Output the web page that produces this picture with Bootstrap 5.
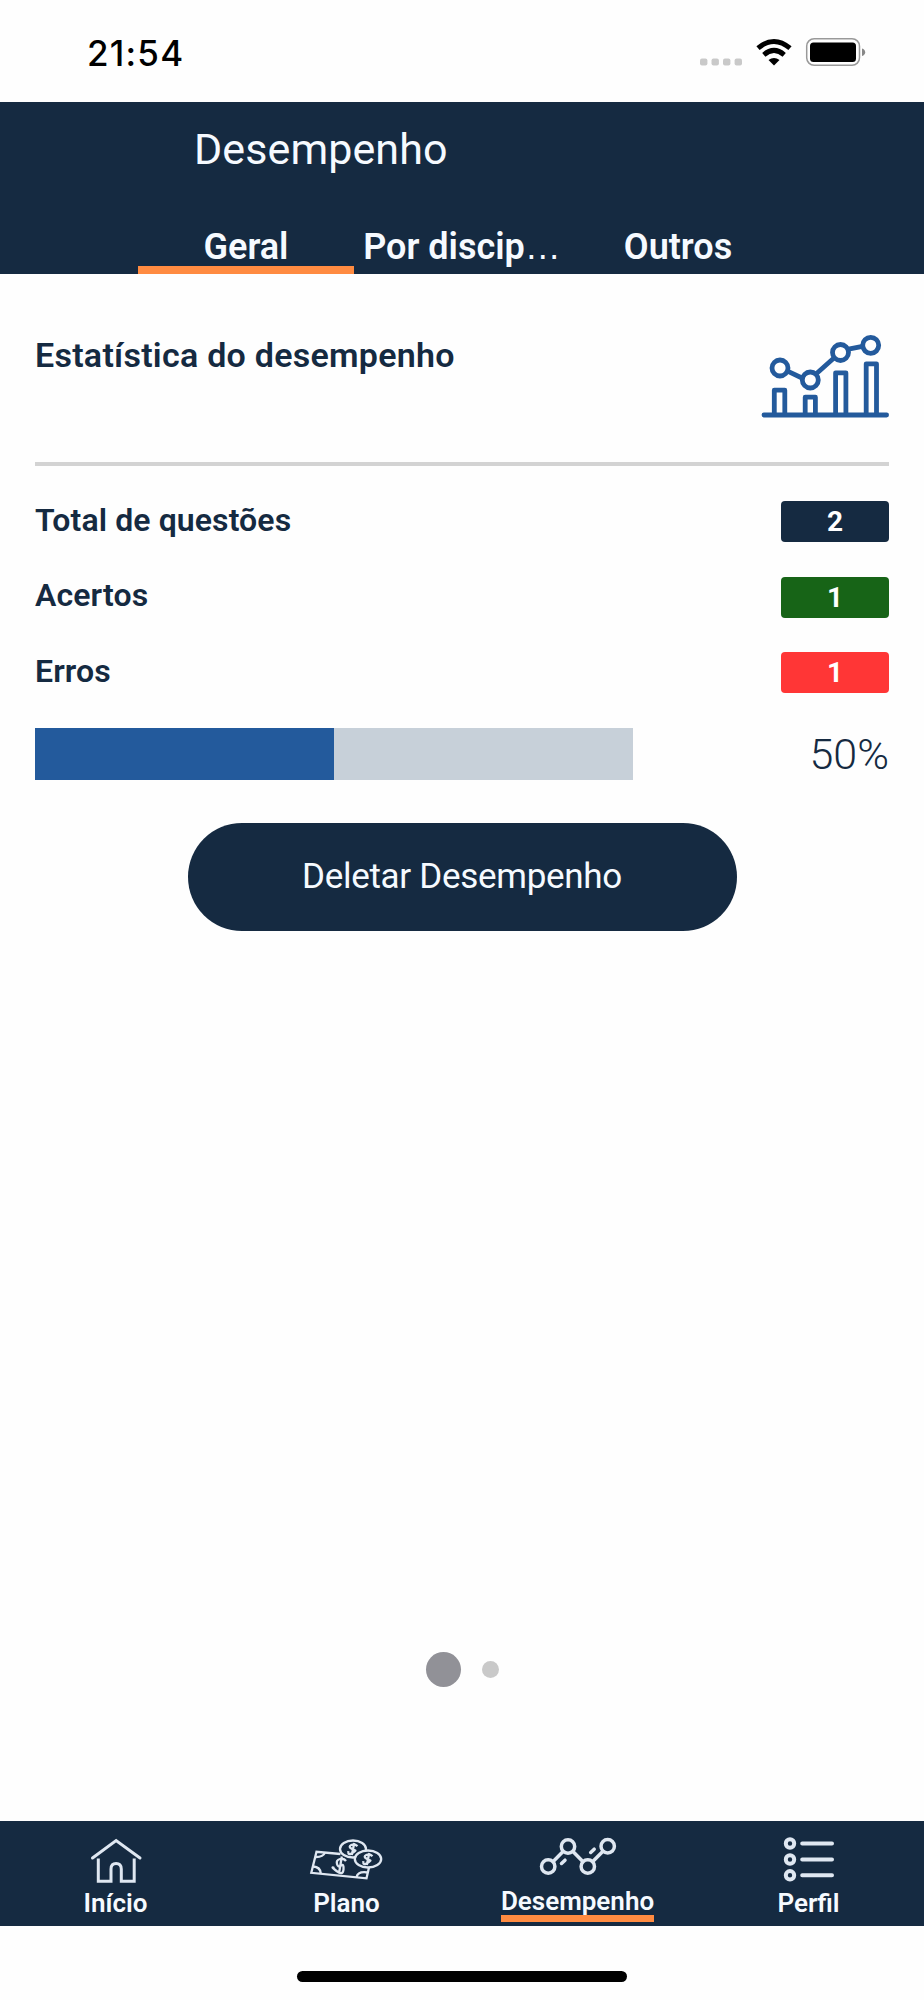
<!DOCTYPE html>
<html lang="pt-BR">
<head>
<meta charset="utf-8">
<meta name="viewport" content="width=device-width, initial-scale=1">
<title>Desempenho</title>
<link href="https://cdn.jsdelivr.net/npm/bootstrap@5.3.0/dist/css/bootstrap.min.css" rel="stylesheet">
<style>
:root{--navy:#152a41;--blue:#235a9c;--orange:#ff8b41}
body{font-family:Roboto,"Liberation Sans",sans-serif;color:var(--navy);background:#fefefe}
.screen{height:2000px;overflow:hidden}
.statusbar{height:102px;padding:0 58px 0 87px}
.clock{font:500 35px/40px Inter,Roboto,sans-serif;letter-spacing:1.2px;color:#000;padding-top:33px}
.status-icons{width:170px;height:40px;margin-top:32px}
.app-header{background:var(--navy);color:#f6faff;height:172px}
.app-title{font-size:43px;font-weight:400;line-height:94px;letter-spacing:.1px;padding-left:194px;margin:0}
.tabs-row{width:648px}
.tab-link{flex:1 1 0;min-width:0;padding:32px 0 0;height:78px;font-size:36px;line-height:38px;font-weight:600;text-align:center;white-space:nowrap;color:inherit;text-decoration:none;border-bottom:8px solid transparent}
.tab-link.active{border-color:var(--orange)}
.ellipsis{font-family:"Liberation Sans",sans-serif;font-weight:400;line-height:1}
.content{padding:0 35px}
.section-head{height:188px;border:0}
.section-title{font-size:34px;line-height:40px;font-weight:600;letter-spacing:.26px;margin:61px 0 0}
.chart-icon{width:130px;height:90px;margin-top:56px}
.rule{height:4px;background:#d3d3d3;margin-bottom:18px}
.stat{height:75.5px;font-size:32px;font-weight:600}
.stat-name{line-height:38px;letter-spacing:.1px;margin-top:-4px}
.pill{width:108px;height:41px;line-height:41px;border-radius:4px;color:#fff;font-size:28px;font-weight:700;text-align:center}
.score{margin-top:17px;height:52px}
.score .progress{width:598px;height:52px;border-radius:0;background:#c7d0d9}
.score .progress-bar{background:var(--blue)}
.percent{font-size:43px;font-weight:350;line-height:52px}
.btn-delete{width:549px;height:108px;margin-top:43px;border-radius:54px;background:var(--navy);color:#f6faff;font-size:35px;letter-spacing:-.3px;line-height:106px;padding:0;border:0}
.pager{gap:21px;margin-bottom:134px;height:36px}
.dot-on{width:35px;height:35px;background:#919197}
.dot-off{width:17px;height:17px;background:#c9c9c9}
.bottom-nav{height:105px;background:var(--navy)}
.nav-cell{flex:1 1 0;color:#f6faff;text-decoration:none;font-size:26px;font-weight:600;line-height:32px}
.nav-cell svg{width:90px;height:66px;stroke:#dfe7f1;fill:none;display:block}
.nav-cell.active{line-height:28px}
.nav-cell.active span{height:35px;border-bottom:7px solid var(--orange)}
.home-area{height:74px;padding-top:45px}
.home-bar{width:330px;height:11px;border-radius:6px;background:#000}
</style>
</head>
<body>
<div class="screen d-flex flex-column">
  <div class="statusbar d-flex justify-content-between flex-shrink-0">
    <div class="clock">21:54</div>
    <svg class="status-icons" viewBox="696 32 170 40">
      <g fill="#c9c9c9"><rect x="700" y="58.5" width="7.4" height="7" rx="2"/><rect x="711.5" y="58.5" width="7.4" height="7" rx="2"/><rect x="723" y="58.5" width="7.4" height="7" rx="2"/><rect x="734.6" y="58.5" width="7.4" height="7" rx="2"/></g>
      <g fill="none" stroke="#000" stroke-width="5"><path d="M758 48.2Q774 34.8 790 48.2"/><path d="M763.8 54.8Q774 46 784.2 54.8"/></g>
      <path d="M768.5 60Q774 55.8 779.5 60L774 65.5Z"/>
      <rect x="806.7" y="38.7" width="52.8" height="26.6" rx="7.5" fill="none" stroke="#999" stroke-width="1.5"/>
      <rect x="810" y="42.5" width="46" height="19.5" rx="3.5"/>
      <path d="M862 48.5Q865.2 49.5 865.2 52.2T862 56Z" fill="#888"/>
    </svg>
  </div>
  <header class="app-header flex-shrink-0">
    <h1 class="app-title">Desempenho</h1>
    <nav class="tabs-row d-flex mx-auto">
      <a class="tab-link active" href="#">Geral</a>
      <a class="tab-link" href="#">Por discip<span class="ellipsis">…</span></a>
      <a class="tab-link" href="#">Outros</a>
    </nav>
  </header>
  <main class="content d-flex flex-column flex-grow-1">
    <div class="section-head d-flex justify-content-between">
      <h2 class="section-title">Estatística do desempenho</h2>
      <svg class="chart-icon" viewBox="759 330 130 90" fill="none" stroke="#235a9c" stroke-width="4.8">
        <path d="M764 415H886.6" stroke-linecap="round"/>
        <g stroke-linejoin="round"><path d="M774.3 414V390.2H784.8V414M805.2 414V397.2H815.4V414M835.6 414V372.8H845.9V414M866.2 414V363.8H876.5V414"/></g>
        <g><circle cx="780" cy="368" r="8"/><circle cx="810.3" cy="380" r="8"/><circle cx="840.5" cy="352.5" r="8"/><circle cx="870.7" cy="345.3" r="8"/></g>
        <path d="M787 370.8L803 378.5M816 374L834.5 357.5M848.5 349.2L862.5 346.3"/>
      </svg>
    </div>
    <div class="rule"></div>
    <div class="stat d-flex justify-content-between align-items-center"><span class="stat-name">Total de questões</span><span class="pill" style="background:#152a41">2</span></div>
    <div class="stat d-flex justify-content-between align-items-center"><span class="stat-name">Acertos</span><span class="pill" style="background:#176417">1</span></div>
    <div class="stat d-flex justify-content-between align-items-center"><span class="stat-name">Erros</span><span class="pill" style="background:#ff3636">1</span></div>
    <div class="score d-flex justify-content-between">
      <div class="progress"><div class="progress-bar" style="width:50%"></div></div>
      <span class="percent">50%</span>
    </div>
    <button type="button" class="btn btn-delete align-self-center">Deletar Desempenho</button>
    <div class="pager d-flex justify-content-center align-items-center mt-auto">
      <span class="dot-on rounded-circle"></span><span class="dot-off rounded-circle"></span>
    </div>
  </main>
  <nav class="bottom-nav d-flex flex-shrink-0">
    <a class="nav-cell d-flex flex-column align-items-center" href="#">
      <svg viewBox="70.5 1821 90 66" stroke-width="3"><path d="M92 1858L115.6 1840.5L139.5 1858" stroke-linecap="round"/><path d="M97.8 1858.5V1881.3H110.5V1869Q110.5 1863.5 115.6 1863.5T120.8 1869V1881.3H133.7V1858.5"/></svg>
      <span>Início</span>
    </a>
    <a class="nav-cell d-flex flex-column align-items-center" href="#">
      <svg viewBox="302.5 1821 90 66" stroke-width="2.3">
        <path d="M341 1854L317 1851.8L311.8 1872.8L367 1878.3L369.5 1867.5"/>
        <path d="M325.5 1852.6Q323.5 1857.2 316 1857M313.5 1866.5Q321 1867 321.3 1873.6M357 1877.2Q358.5 1871 368 1872.5"/>
        <ellipse cx="353.5" cy="1849" rx="13" ry="8.5"/><ellipse cx="368.5" cy="1859" rx="13.2" ry="8.5" fill="#152a41"/>
        <path d="M346.5 1861Q344.5 1858 340.5 1859T337.5 1864T341.5 1865.5T344 1869.5T337 1871T334.8 1868M342.3 1856.5L339.5 1873.5"/>
        <path d="M358 1846.2Q355 1843.5 351.8 1845T351.8 1848.5T355.8 1850.5T352.5 1853.2T348.8 1851.2M354.8 1843L352.3 1855"/>
        <path d="M373 1856.2Q370 1853.5 366.8 1855T366.8 1858.5T370.8 1860.5T367.5 1863.2T363.8 1861.2M369.8 1853L367.3 1865"/>
      </svg>
      <span>Plano</span>
    </a>
    <a class="nav-cell active d-flex flex-column align-items-center" href="#">
      <svg viewBox="532.5 1821 90 66" stroke-width="3.5"><circle cx="547.7" cy="1866.5" r="6.7"/><circle cx="567.5" cy="1846.5" r="6.7"/><circle cx="587.3" cy="1866.5" r="6.7"/><circle cx="607.2" cy="1846.3" r="6.7"/><path d="M552.7 1861.5L562.5 1851.5M572.5 1851.5L582.3 1861.5M592.3 1861.5L602.2 1851.5"/><path d="M561 1863.5L564.5 1860.2M590.2 1852.5L593.7 1849.2" stroke-linecap="round"/></svg>
      <span>Desempenho</span>
    </a>
    <a class="nav-cell d-flex flex-column align-items-center" href="#">
      <svg viewBox="763.5 1821 90 66" stroke-width="4"><g><circle cx="789.5" cy="1843.5" r="4.2"/><circle cx="789.5" cy="1859.5" r="4.2"/><circle cx="789.5" cy="1875.3" r="4.2"/></g><path d="M801.7 1843.5H831.5M801.7 1859.5H831.5M801.7 1875.3H831.5" stroke-linecap="round"/></svg>
      <span>Perfil</span>
    </a>
  </nav>
  <div class="home-area flex-shrink-0"><div class="home-bar mx-auto"></div></div>
</div>
<script src="https://cdn.jsdelivr.net/npm/bootstrap@5.3.0/dist/js/bootstrap.bundle.min.js"></script>
</body>
</html>
